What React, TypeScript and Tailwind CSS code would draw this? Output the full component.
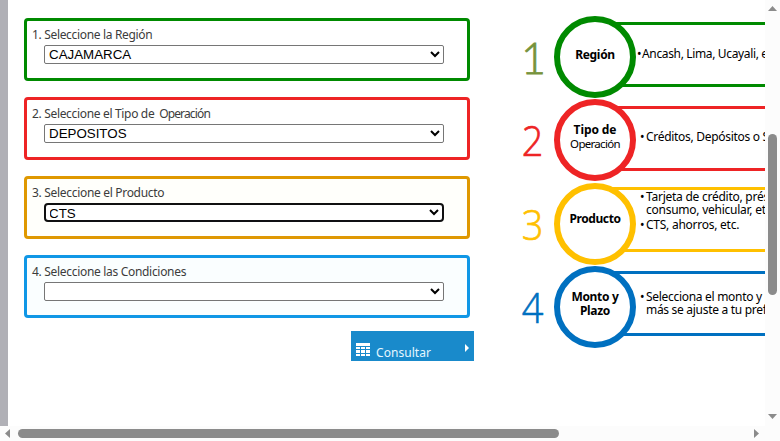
import type { ReactNode } from "react";

type Field = { label: ReactNode; value: string; box: string; labelClass: string; select: string };

const plain = "rounded-[2px] border border-[#767676]";

const fields: Field[] = [
  { label: "1. Seleccione la Región", value: "CAJAMARCA", box: "border-[#008a00]", labelClass: "tracking-[-0.33px]", select: plain },
  { label: <>2. Seleccione el Tipo de <span className="ml-[2px] tracking-[-0.85px]">Operación</span></>, value: "DEPOSITOS", box: "border-[#ee2425]", labelClass: "tracking-[-0.33px]", select: plain },
  { label: "3. Seleccione el Producto", value: "CTS", box: "border-[#df9800] bg-[#fffffb]", labelClass: "tracking-[-0.31px]", select: "rounded-[4px] border-2 border-[#101010] -indent-px" },
  { label: "4. Seleccione las Condiciones", value: "", box: "border-[#1097e6] bg-[#fafeff]", labelClass: "tracking-[-0.31px]", select: plain },
];

function FieldBox({ label, value, box, labelClass, select }: Field) {
  return (
    <div className={`h-[63px] w-[446px] shrink-0 rounded-[4px] border-3 pl-[5px] pt-[5px] ${box}`}>
      <div className={`h-[19px] whitespace-nowrap font-['Noto_Sans',sans-serif] text-[12px] leading-[18px] text-[#3c3c3c] ${labelClass}`}>{label}</div>
      <select
        defaultValue={value}
        className={`ml-3 block h-[19px] w-[400px] bg-white font-['Liberation_Sans',Arial,sans-serif] text-[13.333px] text-black outline-none ${select}`}
      >
        <option value={value}>{value}</option>
      </select>
    </div>
  );
}

type Step = {
  n: string;
  row: string;
  bar: string;
  digit: string;
  border: string;
  title: ReactNode;
  titlePad: string;
  body: ReactNode;
};

function Bullet({ children, lead }: { children: ReactNode; lead?: string }) {
  return (
    <div className="flex leading-[13px]">
      <span className={lead ?? "w-[6px]"}>•</span>
      <div>{children}</div>
    </div>
  );
}

const thin = "pt-[18px] font-['Open_Sans',sans-serif] font-light text-[43px] origin-left scale-x-[0.88] pl-[2px] [-webkit-text-stroke:0.7px_currentColor]";

const steps: Step[] = [
  {
    n: "1", row: "h-[83px]", bar: "mt-[6px] pt-[22px] pl-[42px] tracking-[-0.35px]", digit: "pt-[19px] pl-px font-['Lato',sans-serif] text-[43px] font-light [-webkit-text-stroke:0.8px_currentColor] text-[#77933c]", border: "border-[#008a00]",
    title: <b className="tracking-[-0.3px]">Región</b>, titlePad: "pb-1", body: <Bullet lead="w-[5px]">Ancash, Lima, Ucayali, etc.</Bullet>,
  },
  {
    n: "2", row: "h-[84px]", bar: "mt-[7px] pt-[21px] pl-[45px] tracking-[-0.3px]", digit: `${thin} text-[#ee2425]`, border: "border-[#ee2425]",
    title: <><b className="tracking-[-0.1px]">Tipo de</b><br /><span className="text-[11.5px] tracking-[-0.7px]">Operación</span></>, titlePad: "pb-[7px]",
    body: <Bullet>Créditos, Depósitos o Seguros</Bullet>,
  },
  {
    n: "3", row: "h-[83px]", bar: "mt-[4px] pt-0 pl-[45px] tracking-[-0.25px]", digit: `${thin} text-[#ffc000]`, border: "border-[#ffc000]",
    title: <b className="tracking-[-0.4px]">Producto</b>, titlePad: "pb-[11px]",
    body: <><Bullet>Tarjeta de crédito, préstamo<br />consumo, vehicular, etc.</Bullet><div className="h-0.5" /><Bullet>CTS, ahorros, etc.</Bullet></>,
  },
  {
    n: "4", row: "h-[82px]", bar: "mt-[5px] pt-[16px] pl-[45px] tracking-[-0.3px]", digit: `${thin} text-[#0070c0]`, border: "border-[#0070c0]",
    title: <b className="tracking-[-0.3px]">Monto y<br />Plazo</b>, titlePad: "pb-[6px]",
    body: <Bullet>Selecciona el monto y plazo<br />más se ajuste a tu preferencia</Bullet>,
  },
];

function StepRow({ n, row, bar, digit, border, title, titlePad, body }: Step) {
  return (
    <div className={`flex w-[420px] items-start ${row}`}>
      <div className={`w-[34px] leading-[46px] ${digit}`}>{n}</div>
      <div className={`z-10 flex size-[82px] shrink-0 items-center justify-center rounded-full border-6 bg-white text-center text-[12px] leading-[14px] ${border} ${titlePad}`}>
        <div>{title}</div>
      </div>
      <div className={`-ml-[41px] h-[65px] grow whitespace-nowrap border-y-3 text-[12px] ${border} ${bar}`}>{body}</div>
    </div>
  );
}

export default function App() {
  return (
    <div className="flex h-[441px] w-[780px] flex-col overflow-hidden bg-white font-['Noto_Sans',sans-serif] text-black">
      <div className="flex h-[426px]">
        <div className="w-2 shrink-0 bg-[#b0b0b6]" />
        <main className="flex w-[757px] shrink-0 overflow-hidden">
          <section className="flex w-[466px] shrink-0 flex-col gap-4 pl-4 pt-[18px]">
            {fields.map((f, i) => <FieldBox key={i} {...f} />)}
            <button className="-mt-[3px] flex h-[30px] w-[123px] shrink-0 items-center self-end bg-[#198acb] pl-[5px] text-white">
              <svg width="14" height="14" viewBox="0 0 14 14" fill="currentColor" shapeRendering="crispEdges" className="mt-[8px]">
                <path d="M0 0h14v3H0zM0 4h4v2H0zM5 4h4v2H5zM10 4h4v2h-4zM0 7h4v3H0zM5 7h4v3H5zM10 7h4v3h-4zM0 11h4v2H0zM5 11h4v2H5zM10 11h4v2h-4z" />
              </svg>
              <span className="ml-[6px] mt-[13px] text-[12px] leading-4 tracking-[0.05px] text-[#e5f7ff]">Consultar</span>
              <svg width="4" height="8" viewBox="0 0 4 8" fill="currentColor" className="ml-auto mr-[5px] mt-[3px]"><path d="M0 0l4 4-4 4z" /></svg>
            </button>
          </section>
          <section className="ml-[46px] flex shrink-0 flex-col pt-4">
            {steps.map((s) => <StepRow key={s.n} {...s} />)}
          </section>
        </main>
        <div className="flex w-[15px] shrink-0 flex-col items-center bg-[#fcfcfc]">
          <svg width="9" height="5" viewBox="0 0 9 5" className="mt-[6px] shrink-0" fill="#8b8b8b"><path d="M4.5 0L9 5H0z" /></svg>
          <div className="mt-[123px] h-[161px] w-[9px] rounded-full bg-[#8b8b8b]" />
          <svg width="9" height="5" viewBox="0 0 9 5" className="mb-[7px] mt-auto shrink-0" fill="#8b8b8b"><path d="M0 0h9L4.5 5z" /></svg>
        </div>
      </div>
      <div className="flex h-[15px] items-center bg-[#fcfcfc]">
        <svg width="5" height="9" viewBox="0 0 5 9" className="ml-[5px]" fill="#8b8b8b"><path d="M5 0v9L0 4.5z" /></svg>
        <div className="ml-2 h-[9px] w-[541px] rounded-full bg-[#8b8b8b]" />
        <svg width="5" height="9" viewBox="0 0 5 9" className="ml-auto mr-[21px]" fill="#8b8b8b"><path d="M0 0v9l5-4.5z" /></svg>
      </div>
    </div>
  );
}
